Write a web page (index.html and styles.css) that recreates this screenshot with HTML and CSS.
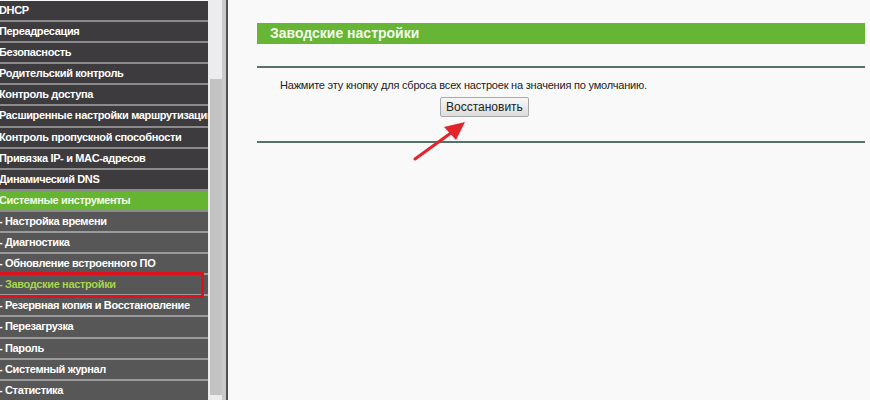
FILE: index.html
```html
<!DOCTYPE html>
<html lang="ru">
<head>
  <meta charset="UTF-8">
  <title>Заводские настройки</title>
  <link rel="stylesheet" href="styles.css">
</head>
<body>

  <div class="frame">
    <div class="menu">
      <div class="item">DHCP</div>
      <div class="item">Переадресация</div>
      <div class="item">Безопасность</div>
      <div class="item">Родительский контроль</div>
      <div class="item">Контроль доступа</div>
      <div class="item">Расширенные настройки маршрутизации</div>
      <div class="item">Контроль пропускной способности</div>
      <div class="item">Привязка IP- и MAC-адресов</div>
      <div class="item">Динамический DNS</div>
      <div class="item group">Системные инструменты</div>
      <div class="item sub">- Настройка времени</div>
      <div class="item sub">- Диагностика</div>
      <div class="item sub">- Обновление встроенного ПО</div>
      <div class="item sub active">- Заводские настройки</div>
      <div class="item sub">- Резервная копия и Восстановление</div>
      <div class="item sub">- Перезагрузка</div>
      <div class="item sub">- Пароль</div>
      <div class="item sub">- Системный журнал</div>
      <div class="item sub">- Статистика</div>
    </div>

    <div class="scroll">
      <div class="thumb"></div>
    </div>
    <div class="edge"></div>

    <div class="content">
      <div class="title">Заводские настройки</div>
      <div class="panel">
        <p class="hint">Нажмите эту кнопку для сброса всех настроек на значения по умолчанию.</p>
        <button class="restore">Восстановить</button>
      </div>

      <!-- стрелка-указатель -->
      <svg class="arrow" width="70" height="50" viewBox="0 0 70 50">
        <line x1="6" y1="45" x2="46" y2="16" stroke="#e3242b" stroke-width="3" stroke-linecap="round"/>
        <polygon points="56,8 35,13 47,26" fill="#e3242b"/>
      </svg>
    </div>
  </div>

</body>
</html>
```

FILE: styles.css
```css
body { margin: 0; background: #f9f9f9; font-family: "Liberation Sans", Arial, sans-serif; }

.frame {
  display: flex;
  height: 400px;
  overflow: hidden;
}

.menu {
  width: 208px;
  flex-shrink: 0;
  overflow: hidden;
}
.item {
  height: 19.1px;
  line-height: 18px;
  border-bottom: 2px solid #8b8b8b;
  background: #3d3b3e;
  color: #fff;
  font-size: 11px;
  font-weight: bold;
  letter-spacing: -0.35px;
  white-space: nowrap;
  text-indent: -1px;
  position: relative;
}
.item:first-child { margin-top: 1px; }
.group { background: #66b532; color: #f2fbe9; }
.sub { background: #575758; border-bottom-color: #9a9a9a; }
.active { color: #a6d84a; z-index: 1; }
.active::after {
  content: "";
  position: absolute;
  left: -4px;
  right: 4px;
  top: -3px;
  bottom: -4px;
  border: 3px solid #e0101c;
  border-radius: 2px;
}

.scroll {
  width: 18px;
  flex-shrink: 0;
  background: #ececef;
  padding: 79px 0 0 2px;
  border-right: 4px solid #cacaca;
  box-sizing: border-box;
}
.thumb {
  width: 12px;
  height: 316px;
  background: #c3c3c4;
}
.edge {
  width: 2px;
  flex-shrink: 0;
  background: #505050;
}

.content {
  flex: 1;
  padding: 23px 5px 0 29px;
  position: relative;
}
.title {
  height: 21px;
  line-height: 21px;
  background: #67b535;
  color: #f4fbee;
  font-size: 14px;
  font-weight: bold;
  padding-left: 13px;
}
.panel {
  margin-top: 22px;
  border-top: 2px solid #55716b;
  border-bottom: 2px solid #55716b;
  height: 73px;
}
.hint {
  margin: 11px 0 6px 23px;
  font-size: 11px;
  letter-spacing: -0.2px;
  color: #222;
}
.restore {
  font-family: "Liberation Sans", Arial, sans-serif;
  font-size: 12px;
  color: #222;
  height: 20px;
  padding: 0 5px;
  margin-left: 183px;
  background: linear-gradient(#f7f7f7, #dcdcdc);
  border: 1px solid #a9a9a9;
  border-radius: 2px;
}
.arrow {
  position: absolute;
  left: 181px;
  top: 114px;
}
```
